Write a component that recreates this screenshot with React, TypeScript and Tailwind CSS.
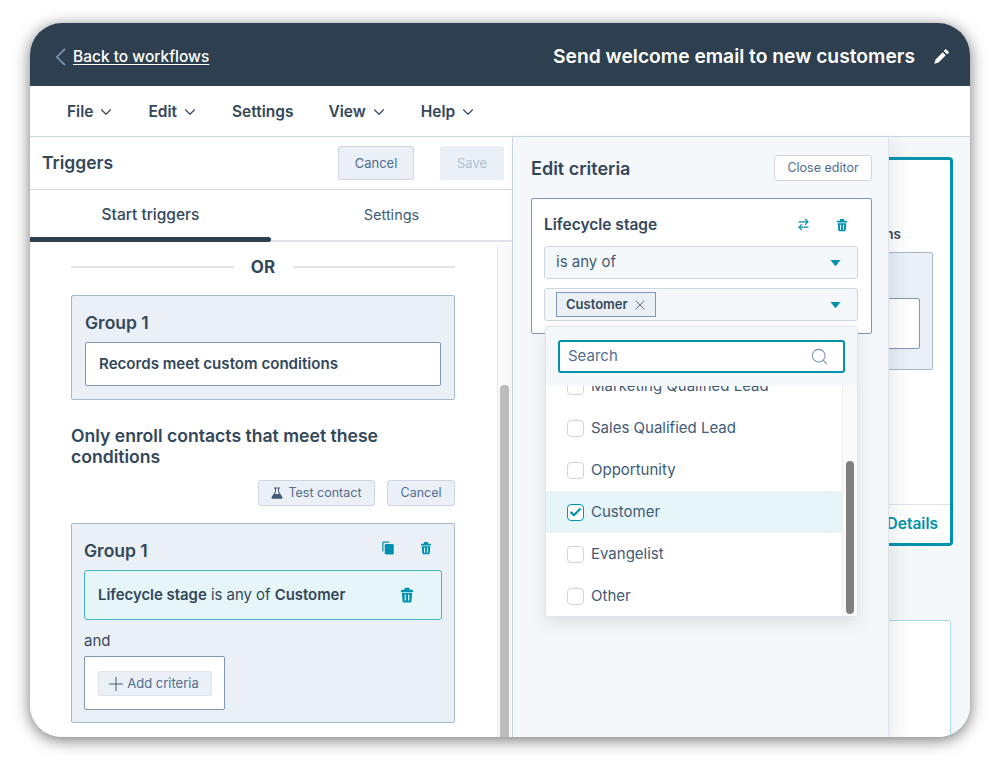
import { ChevronDown, Plus, Search, X, Check } from "lucide-react";

function Trash({ className }: { className: string }) {
  return (
    <svg viewBox="0 0 14 18" className={className} fill="currentColor">
      <path d="M5 0.500h4a1 1 0 0 1 1 1V3h3a1 1 0 0 1 1 1v1.500H0V4a1 1 0 0 1 1-1h3V1.500a1 1 0 0 1 1-1z" />
      <path fillRule="evenodd" d="M1 6.500h12l-0.800 9.800a1.500 1.500 0 0 1-1.500 1.400H3.300a1.500 1.500 0 0 1-1.500-1.400zM4.300 8.500v7h1.400v-7zM8.300 8.500v7h1.400v-7z" />
    </svg>
  );
}

function Copy({ className }: { className: string }) {
  return (
    <svg viewBox="0 0 14 16" className={className} fill="currentColor">
      <path d="M1.500 0.500h7v1.500H2.500a0.800 0.800 0 0 0-0.800 0.800V12H0.300V2a1.500 1.500 0 0 1 1.200-1.500z" />
      <rect x="3.200" y="3.200" width="10.500" height="12.500" rx="1.600" />
    </svg>
  );
}

function Pencil({ className }: { className: string }) {
  return (
    <svg viewBox="0 0 16 16" className={className} fill="currentColor">
      <path d="M11.800 0.500a1 1 0 0 1 1.400 0l2.300 2.300a1 1 0 0 1 0 1.400l-1.500 1.500-3.700-3.700z" />
      <path d="M9.300 3.500l3.200 3.200-7.600 7.600L0.300 15.700l1.400-4.600z" />
    </svg>
  );
}

function Flask({ className }: { className: string }) {
  return (
    <svg viewBox="0 0 14 14" className={className} fill="currentColor">
      <path fillRule="evenodd" d="M3.500 0.500h7v1.200H9.400v3.800l4 6.500c0.400 0.800-0.100 1.600-1 1.600H1.600c-0.900 0-1.400-0.800-1-1.600l4-6.500V1.700H3.500zM5.800 1.700v4.100L4.400 8.200h5.200L8.200 5.800V1.700z" />
    </svg>
  );
}

function Swap({ className }: { className: string }) {
  return (
    <svg viewBox="0 0 11 13" className={className} fill="none" stroke="currentColor" strokeWidth="1.200">
      <path d="M0.500 3.800h9.500M7 0.800l3 3-3 3" />
      <path d="M10.500 9.200H1M4 6.200l-3 3 3 3" />
    </svg>
  );
}

function Caret() {
  return (
    <svg viewBox="0 0 10 6" className="w-[11px] h-[6px] text-[#0091ae]" fill="currentColor">
      <path d="M0 0h10L5.700 5.500a0.900 0.900 0 0 1-1.400 0z" />
    </svg>
  );
}

function MenuItem({ label, caret = true }: { label: string; caret?: boolean }) {
  return (
    <div className={`flex items-center gap-[4px] font-semibold text-[15.500px] ${caret ? "" : "pr-[2px]"}`}>
      {label}
      {caret && <ChevronDown className="w-[18px] h-[18px]" strokeWidth={1.5} />}
    </div>
  );
}

function Option({ label, checked = false }: { label: string; checked?: boolean }) {
  return (
    <div className={`flex items-center gap-[7px] h-[42px] pl-[21px] text-[15px] ${checked ? "bg-[#e5f5f8]" : ""}`}>
      <span
        className={`flex items-center justify-center w-[17px] h-[17px] rounded-[4px] border ${
          checked ? "border-[#0091ae] border-[1.5px] bg-white" : "border-[#cbd6e2] bg-white"
        }`}
      >
        {checked && <Check className="w-[13px] h-[13px] text-[#0091ae]" strokeWidth={4} />}
      </span>
      {label}
    </div>
  );
}

export default function App() {
  return (
    <div
      className="w-[1000px] h-[760px] bg-white pt-[23px] pl-[30px] text-[#33475b]"
      style={{ fontFamily: '"Inter", "Liberation Sans", sans-serif' }}
    >
      <div className="relative flex flex-col w-[940px] h-[714px] rounded-[32px] overflow-hidden bg-white shadow-[0_3px_16px_rgba(0,0,0,0.55)]">
        <header className="flex items-center justify-between h-[63px] shrink-0 bg-[#2e3f50] pl-[25px] pr-[21px] pt-[4px] text-white">
          <div className="flex items-center gap-[7px] text-[15.500px] font-medium">
            <svg viewBox="0 0 11 18" className="w-[11px] h-[18px] text-[#7c98b6]" fill="none" stroke="currentColor" strokeWidth="1.700">
              <path d="M10 0.800L1.800 9l8.200 8.200" />
            </svg>
            <span className="underline underline-offset-2">Back to workflows</span>
          </div>
          <div className="flex items-center gap-[19px]">
            <span className="text-[19.250px] font-semibold">Send welcome email to new customers</span>
            <Pencil className="w-[15px] h-[15px]" />
          </div>
        </header>

        <nav className="flex items-center gap-[33px] h-[51px] shrink-0 pl-[37px] pt-[1px] border-b border-[#cbd6e2]">
          <MenuItem label="File" />
          <MenuItem label="Edit" />
          <MenuItem label="Settings" caret={false} />
          <MenuItem label="View" />
          <MenuItem label="Help" />
        </nav>

        <div className="flex flex-1 min-h-0">
          <section className="flex flex-col w-[483px] shrink-0 bg-white border-r border-[#cbd6e2]">
            <div className="flex items-center justify-between h-[53px] shrink-0 pl-[12px] pr-[8px] border-b border-[#cbd6e2]">
              <h2 className="text-[17.500px] font-semibold pt-[1px]">Triggers</h2>
              <div className="flex gap-[26px]">
                <button className="w-[76px] h-[34px] pt-[1px] rounded-[3px] bg-[#eaf0f6] border border-[#cbd6e2] text-[13px] text-[#506e91]">Cancel</button>
                <button className="w-[64px] h-[34px] pt-[1px] rounded-[3px] bg-[#eaf0f6] text-[13px] text-[#b0c1d4]">Save</button>
              </div>
            </div>

            <div className="relative flex h-[52px] shrink-0 border-b-2 border-[#dfe3eb]">
              <div className="flex items-center justify-center w-[241px] text-[15.500px] font-medium">Start triggers</div>
              <div className="flex items-center justify-center flex-1 text-[14.500px] text-[#425b76]">Settings</div>
              <div className="absolute left-0 -bottom-[2px] w-[241px] h-[5px] rounded-r-[3px] bg-[#2e3f50]" />
            </div>

            <div className="flex flex-1 min-h-0">
              <div className="flex-1 pl-[41px] pr-[42px] overflow-hidden">
                <div className="flex items-center h-[50px]">
                  <div className="flex-1 h-[2px] bg-[#dfe3eb]" />
                  <span className="w-[59px] text-center text-[17px] font-bold pt-[1px]">OR</span>
                  <div className="flex-1 h-[2px] bg-[#dfe3eb]" />
                </div>

                <div className="mt-[3px] h-[105px] rounded-[2px] bg-[#eaf0f6] border border-[#a5b9cd] px-[13px] pt-[17px]">
                  <div className="text-[17.500px] leading-[20px] font-semibold">Group 1</div>
                  <div className="flex items-center h-[44px] mt-[9px] pl-[13px] rounded-[2px] bg-white border border-[#7c98b6] text-[15.100px] font-semibold">
                    Records meet custom conditions
                  </div>
                </div>

                <h3 className="mt-[25px] text-[17.600px] leading-[21px] font-semibold">Only enroll contacts that meet these conditions</h3>

                <div className="flex justify-end gap-[12px] mt-[13px]">
                  <button className="flex items-center justify-center gap-[5px] w-[117px] h-[26px] rounded-[3px] bg-[#eaf0f6] border border-[#cbd6e2] text-[12.500px] text-[#506e91]">
                    <Flask className="w-[12px] h-[12px] text-[#425b76]" />
                    Test contact
                  </button>
                  <button className="w-[68px] h-[26px] rounded-[3px] bg-[#eaf0f6] border border-[#cbd6e2] text-[12.500px] text-[#506e91]">Cancel</button>
                </div>

                <div className="mt-[17px] h-[200px] rounded-[2px] bg-[#eaf0f6] border border-[#a5b9cd] px-[12px] pt-[17px]">
                  <div className="flex items-start justify-between">
                    <div className="text-[17.500px] leading-[20px] font-semibold">Group 1</div>
                    <div className="flex gap-[27px] pr-[11px] text-[#0091ae]">
                      <Copy className="w-[12px] h-[14px]" />
                      <Trash className="w-[10px] h-[14px]" />
                    </div>
                  </div>
                  <div className="flex items-center justify-between h-[50px] mt-[9px] pl-[13px] pr-[28px] rounded-[3px] bg-[#e5f5f8] border border-[#45b4c9] text-[14.900px]">
                    <span>
                      <b className="font-semibold">Lifecycle stage</b> is any of <b className="font-semibold">Customer</b>
                    </span>
                    <Trash className="w-[12px] h-[16px] text-[#0091ae]" />
                  </div>
                  <div className="mt-[11px] text-[15px] leading-[20px]">and</div>
                  <div className="flex items-center w-[141px] h-[54px] mt-[5px] pl-[13px] rounded-[2px] bg-white border border-[#7c98b6]">
                    <button className="flex items-center justify-center w-[114px] h-[25px] pt-[1px] pr-[6px] rounded-[2px] bg-[#eaf0f6] border border-[#dfe3eb] text-[13px] text-[#506e91]">
                      <Plus className="w-[22px] h-[22px] text-[#425b76]" strokeWidth={1.1} />
                      Add criteria
                    </button>
                  </div>
                </div>
              </div>

              <div className="relative w-[15px] shrink-0 mt-[3px] bg-[#fafafa] border-l border-[#e5e5e5]">
                <div className="absolute left-[2px] top-[140px] bottom-0 w-[9px] rounded-t-[4px] bg-[#bdbdbd]" />
              </div>
            </div>
          </section>

          <aside className="relative z-10 flex flex-col w-[376px] shrink-0 bg-[#f5f8fa] border-r border-[#dfe3eb] pl-[18px] pr-[16px] shadow-[6px_6px_16px_rgba(46,63,80,0.1)]">
            <div className="flex items-center justify-between h-[61px] shrink-0">
              <h2 className="text-[18px] font-semibold pt-[2px]">Edit criteria</h2>
              <button className="w-[98px] h-[26px] pt-[2px] rounded-[3px] bg-white border border-[#cbd6e2] text-[12.500px] text-[#506e91]">Close editor</button>
            </div>

            <div className="h-[136px] rounded-[2px] bg-white border border-[#7c98b6] pl-[12px] pr-[13px]">
              <div className="flex items-center justify-between h-[47px] pr-[11px] pt-[4px]">
                <span className="text-[15.500px] font-semibold">Lifecycle stage</span>
                <div className="flex items-center gap-[28px] text-[#0091ae]">
                  <Swap className="w-[11px] h-[13px]" />
                  <Trash className="w-[10px] h-[14px]" />
                </div>
              </div>
              <div className="flex items-center justify-between h-[33px] pl-[11px] pr-[16px] rounded-[3px] bg-[#f5f8fa] border border-[#cbd6e2] text-[15px] text-[#425b76]">
                is any of
                <Caret />
              </div>
              <div className="flex items-center justify-between h-[33px] mt-[9px] pl-[11px] pr-[16px] rounded-[3px] bg-[#f5f8fa] border border-[#cbd6e2]">
                <span className="flex items-center gap-[4px] w-[100px] h-[25px] pl-[9px] bg-[#eaf0f6] border border-[#7c98b6] text-[13px] font-semibold">
                  Customer
                  <X className="w-[16px] h-[16px]" strokeWidth={1.2} />
                </span>
                <Caret />
              </div>
            </div>

            <div className="absolute left-[32px] top-[189px] flex flex-col w-[313px] h-[291px] rounded-[3px] overflow-hidden bg-white border border-[#dfe3eb] shadow-[0_6px_16px_rgba(46,63,80,0.12)]">
              <div className="h-[59px] shrink-0 bg-[#f5f8fa] px-[12px] pt-[13px]">
                <div className="flex items-center justify-between h-[33px] pl-[8px] pr-[14px] rounded-[3px] bg-white border-2 border-[#0091ae] text-[15px] text-[#506e91]">
                  Search
                  <Search className="w-[19px] h-[19px] text-[#7c98b6]" strokeWidth={1.4} />
                </div>
              </div>
              <div className="flex flex-1 min-h-0">
                <div className="flex-1 overflow-hidden text-[#425b76]">
                  <div className="-mt-[21px]">
                    <Option label="Marketing Qualified Lead" />
                    <Option label="Sales Qualified Lead" />
                    <Option label="Opportunity" />
                    <Option label="Customer" checked />
                    <Option label="Evangelist" />
                    <Option label="Other" />
                  </div>
                </div>
                <div className="relative w-[15px] shrink-0 bg-[#fafafa] border-l border-[#eeeeee]">
                  <div className="absolute left-[3px] top-[75px] h-[153px] w-[8px] rounded-[4px] bg-[#808080]" />
                </div>
              </div>
            </div>
          </aside>

          <div className="flex-1 min-w-0 overflow-hidden bg-[#f5f8fa] pt-[20px]">
            <div className="flex flex-col w-[300px] h-[389px] -ml-[236px] rounded-[4px] bg-white border-[3px] border-[#0091ae]">
              <div className="flex-1 pl-[20px] pr-[17px] pt-[66px]">
                <div className="text-[13.500px] leading-[16px] font-semibold text-right pr-[32px]">Conditions</div>
                <div className="h-[118px] mt-[10px] rounded-[2px] bg-[#eaf0f6] border border-[#a5b9cd] pl-[10px] pr-[12px] pt-[45px]">
                  <div className="h-[51px] rounded-[2px] bg-white border border-[#7c98b6]" />
                </div>
              </div>
              <div className="flex items-center justify-end h-[39px] pr-[12px] border-t border-[#dfe3eb] text-[15.500px] font-semibold text-[#0091ae]">Details</div>
            </div>
            <div className="w-[300px] h-[200px] mt-[74px] -ml-[238px] rounded-[3px] bg-white border border-[#a5dbe6]" />
          </div>
        </div>
      </div>
    </div>
  );
}
